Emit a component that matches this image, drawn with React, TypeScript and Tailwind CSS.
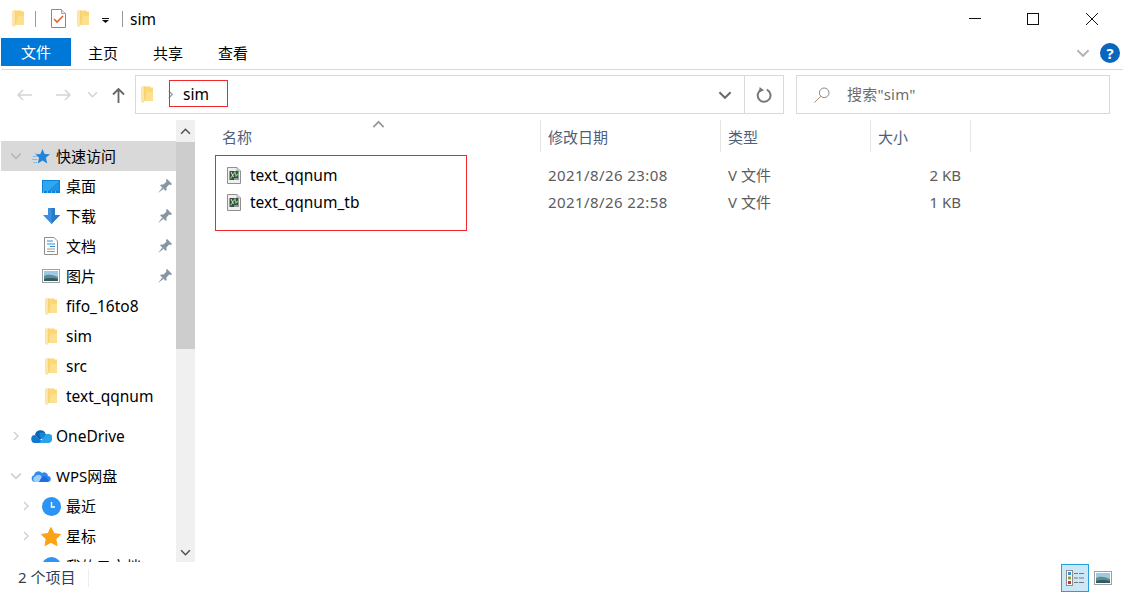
import type { ReactNode } from "react";

// Small inline icons for the explorer chrome
function Folder({ className = "" }: { className?: string }) {
  return (
    <svg viewBox="0 0 12 17" className={`h-[17px] w-[12px] ${className}`}>
      <path d="M2 0.5 H9.5 V1.5 H12 V15 H2 Z" fill="#fbd778" />
      <path d="M0 0.5 H3.5 V15 H3 V17 L0 16 Z" fill="#fbe5aa" />
      <path d="M6 6 H12 V15 H4 Z" fill="#fde08e" />
      <path d="M3.5 0.5 V15" stroke="#f4c964" strokeWidth="0.6" fill="none" />
    </svg>
  );
}

function TaskDoc() {
  return (
    <svg viewBox="0 0 15 19" className="h-[19px] w-[15px]">
      <path d="M0.5 0.5 H10.5 L14.5 4.5 V18.5 H0.5 Z" fill="#fff" stroke="#8a8a8a" />
      <path d="M10.5 0.5 V4.5 H14.5" fill="#e8e8e8" stroke="#a8a8a8" />
      <path d="M3 10 L6 13 L12 7" fill="none" stroke="#e8622a" strokeWidth="1.6" />
    </svg>
  );
}

function Dropdown() {
  return (
    <svg viewBox="0 0 7 5" className="h-[5px] w-[7px]">
      <path d="M0 0 H7 V1 H0 Z M0 2 H7 L3.5 5 Z" fill="#111" />
    </svg>
  );
}

function WindowControls() {
  return (
    <div className="flex h-full items-center">
      <svg viewBox="0 0 12 12" className="mr-[46px] h-[12px] w-[12px]">
        <path d="M0 5.5 H12" stroke="#111" fill="none" />
      </svg>
      <svg viewBox="0 0 12 12" className="mr-[47px] h-[12px] w-[12px]">
        <rect x="0.5" y="0.5" width="11" height="11" stroke="#111" fill="none" />
      </svg>
      <svg viewBox="0 0 12 12" className="mr-[25px] h-[12px] w-[12px]">
        <path d="M0 0 L12 12 M12 0 L0 12" stroke="#111" fill="none" />
      </svg>
    </div>
  );
}

function HelpBadge() {
  return (
    <div className="flex h-[20px] w-[20px] items-center justify-center rounded-full bg-[#0a65bd] text-[15px] font-bold leading-none text-white">
      ?
    </div>
  );
}

function Chevron({ dir, color = "#c4c4c4", size = 10 }: { dir: "down" | "right" | "up"; color?: string; size?: number }) {
  const d = dir === "down" ? "M1 3 L5 7 L9 3" : dir === "up" ? "M1 7 L5 3 L9 7" : "M3 1 L7 5 L3 9";
  return (
    <svg viewBox="0 0 10 10" width={size} height={size}>
      <path d={d} fill="none" stroke={color} strokeWidth="1.4" />
    </svg>
  );
}

function Arrow({ dir, color }: { dir: "left" | "right"; color: string }) {
  const d = dir === "left" ? "M15 6 H1 M6 1 L1 6 L6 11" : "M0 6 H14 M9 1 L14 6 L9 11";
  return (
    <svg viewBox="0 0 15 12" className="h-[12px] w-[15px]">
      <path d={d} fill="none" stroke={color} strokeWidth="1.5" />
    </svg>
  );
}

function UpArrow() {
  return (
    <svg viewBox="0 0 13 15" className="h-[15px] w-[13px]">
      <path d="M6.5 15 V1 M1 6.5 L6.5 1 L12 6.5" fill="none" stroke="#666" strokeWidth="1.8" />
    </svg>
  );
}

function Refresh() {
  return (
    <svg viewBox="0 0 16 16" className="h-[16px] w-[16px]">
      <path d="M5 2.8 A6.4 6.4 0 1 0 10.8 2.6" fill="none" stroke="#777" strokeWidth="2" />
      <path d="M3.6 0 L8 3.2 L3 5.6 Z" fill="#777" />
    </svg>
  );
}

function SearchGlass() {
  return (
    <svg viewBox="0 0 16 16" className="h-[16px] w-[16px]">
      <circle cx="10.2" cy="5.8" r="4.8" fill="none" stroke="#8a8a8a" />
      <path d="M6.8 9.2 L0.5 15.5" stroke="#b08c6a" fill="none" />
    </svg>
  );
}

function Pin() {
  return (
    <svg viewBox="0 0 13 13" className="h-[14px] w-[14px]">
      <path d="M8.4 0 L13 4.6 L12 5.6 L10.4 5.2 L7.8 8 L8 10.4 L7 11 L2 6 L2.8 5 L5 5.2 L7.8 2.6 L7.4 1 Z" fill="#8794a1" />
      <path d="M4 8 L0 13 L5 9.2 Z" fill="#8794a1" />
    </svg>
  );
}

function QuickStar() {
  return (
    <svg viewBox="0 0 18 15" className="h-[15px] w-[18px]">
      <path d="M10.5 0 L12.6 4.9 L18 5.3 L13.9 8.8 L15.2 14.5 L10.5 11.5 L5.8 14.5 L7.1 8.8 L3.4 5.4 L8.4 4.9 Z" fill="#1f84dc" />
      <path d="M0.5 7.5 H4.5 M0 10.5 H5.5 M1.5 13.5 H5" stroke="#80bdec" fill="none" />
      <path d="M2 4.5 H6" stroke="#a9d2f2" fill="none" />
    </svg>
  );
}

function DesktopIcon() {
  return (
    <svg viewBox="0 0 18 13" className="h-[13px] w-[18px]">
      <rect width="18" height="13" fill="#0a84d8" />
      <rect x="1" y="1" width="16" height="10" fill="#2ea8f0" />
      <path d="M17 1 V11 H6 Z" fill="#1f93e4" />
      <path d="M1 12 H17" stroke="#bfe3fa" strokeDasharray="1 3" fill="none" />
    </svg>
  );
}

function DownloadIcon() {
  return (
    <svg viewBox="0 0 17 16" className="h-[16px] w-[17px]">
      <path d="M5 0 H12 V7 H17 L8.5 16 L0 7 H5 Z" fill="#3b8fdc" />
      <path d="M8.5 0 H12 V7 H17 L8.5 16 Z" fill="#2a7cca" />
    </svg>
  );
}

function DocsIcon() {
  return (
    <svg viewBox="0 0 14 18" className="h-[18px] w-[14px]">
      <path d="M0.5 0.5 H10 L13.5 4 V17.5 H0.5 Z" fill="#fff" stroke="#8d8d8d" />
      <path d="M3 4 H9 M3 7 H11 M6 9.5 H11" stroke="#2f8ed8" fill="none" />
      <path d="M3 12 H11 M3 14.5 H11" stroke="#9a9a9a" fill="none" />
    </svg>
  );
}

function Landscape({ className = "" }: { className?: string }) {
  return (
    <svg viewBox="0 0 18 14" className={className}>
      <rect x="0.5" y="0.5" width="17" height="13" fill="#fff" stroke="#a0a0a0" />
      <rect x="2" y="2" width="14" height="10" fill="#9cc8ea" />
      <path d="M2 7 Q7 4 16 8 V12 H2 Z" fill="#5f8f84" />
      <path d="M2 10 Q9 8 16 10 V12 H2 Z" fill="#2f5a66" />
    </svg>
  );
}

function OneDriveIcon() {
  return (
    <svg viewBox="0 0 21 14" className="h-[14px] w-[21px]">
      <path d="M4 6 A5.5 5.5 0 0 1 14.5 4.5 L9 11 Z" fill="#0a64b5" />
      <path d="M8 5 A4 4 0 0 1 15 5.5 A4 4 0 0 1 19 9 L10 10 Z" fill="#1487d8" />
      <path d="M4.5 14 A4 4 0 0 1 4 6 L13 14 Z" fill="#0f78cf" />
      <path d="M8 14 L14 7 A3.5 3.5 0 0 1 21 10.5 A3.5 3.5 0 0 1 18 14 Z" fill="#2aa3ea" />
    </svg>
  );
}

function WpsCloud() {
  return (
    <svg viewBox="0 0 20 14" className="h-[14px] w-[20px]">
      <path d="M4 13 A3.5 3.5 0 0 1 3 6.2 A4.5 4.5 0 0 1 11 4 A3.8 3.8 0 0 1 17 7 A3 3 0 0 1 16.5 13 Z" fill="#2f8bf0" />
      <path d="M4 13 A3 3 0 0 1 4 7.5 A4 4 0 0 1 11 8 L8 13 Z" fill="#9fd0fb" />
      <path d="M8 13 L11 8 A3 3 0 0 1 16 9 A2.2 2.2 0 0 1 16.5 13 Z" fill="#1d6fe0" />
    </svg>
  );
}

function ClockIcon() {
  return (
    <svg viewBox="0 0 19 19" className="h-[19px] w-[19px]">
      <circle cx="9.5" cy="9.5" r="9.5" fill="#2b94f4" />
      <path d="M9.5 5 V10 H13" fill="none" stroke="#fff" strokeWidth="1.4" />
    </svg>
  );
}

function StarIcon() {
  return (
    <svg viewBox="0 0 20 19" className="h-[19px] w-[20px]">
      <path d="M10 0.5 L13 6.6 L19.6 7.4 L14.8 12 L16 18.6 L10 15.4 L4 18.6 L5.2 12 L0.4 7.4 L7 6.6 Z" fill="#fba317" strokeLinejoin="round" stroke="#fba317" />
    </svg>
  );
}

function CloudDocIcon() {
  return (
    <svg viewBox="0 0 19 19" className="h-[19px] w-[19px]">
      <circle cx="9.5" cy="9.5" r="9.5" fill="#2b94f4" />
    </svg>
  );
}

function VerilogFile() {
  return (
    <svg viewBox="0 0 14 17" className="h-[17px] w-[14px]">
      <path d="M0.5 0.5 H10 L13.5 4 V16.5 H0.5 Z" fill="#efefef" stroke="#8f8f8f" />
      <path d="M10 0.5 V4 H13.5" fill="#dcdcdc" stroke="#a8a8a8" />
      <rect x="2.5" y="4" width="9" height="9" fill="#3a4a44" />
      <path d="M3.5 11.5 L8 5 L9 9 L11 7" fill="none" stroke="#6fd05e" strokeWidth="1.3" />
      <path d="M4 5 L6.5 10 M7 12 H11" fill="none" stroke="#dfe9e2" />
    </svg>
  );
}

function DetailsView() {
  return (
    <svg viewBox="0 0 18 16" className="h-[16px] w-[18px]">
      <rect x="0.5" y="0.5" width="6" height="15" fill="#fff" stroke="#8e8e8e" />
      <rect x="2" y="2" width="3" height="3" fill="#3c8fd8" />
      <rect x="2" y="6.5" width="3" height="3" fill="#8aa03c" />
      <rect x="2" y="11" width="3" height="3" fill="#c0392b" />
      <path d="M8 3.5 H12 M13 3.5 H18 M8 8 H12 M13 8 H18 M8 12.5 H12 M13 12.5 H18" stroke="#777" fill="none" />
    </svg>
  );
}

type NavItem = {
  label: string;
  icon: ReactNode;
  nested?: boolean;
  latin?: boolean;
  chevron?: "down" | "right";
  pinned?: boolean;
  active?: boolean;
};

const quickAccess: NavItem[] = [
  { label: "快速访问", icon: <QuickStar />, chevron: "down", active: true },
  { label: "桌面", icon: <DesktopIcon />, nested: true, pinned: true },
  { label: "下载", icon: <DownloadIcon />, nested: true, pinned: true },
  { label: "文档", icon: <DocsIcon />, nested: true, pinned: true },
  { label: "图片", icon: <Landscape className="h-[14px] w-[18px]" />, nested: true, pinned: true },
  { label: "fifo_16to8", icon: <Folder />, nested: true, latin: true },
  { label: "sim", icon: <Folder />, nested: true, latin: true },
  { label: "src", icon: <Folder />, nested: true, latin: true },
  { label: "text_qqnum", icon: <Folder />, nested: true, latin: true },
];

const wpsDrive: NavItem[] = [
  { label: "WPS网盘", icon: <WpsCloud />, chevron: "down" },
  { label: "最近", icon: <ClockIcon />, nested: true, chevron: "right" },
  { label: "星标", icon: <StarIcon />, nested: true, chevron: "right" },
  { label: "我的云文档", icon: <CloudDocIcon />, nested: true, chevron: "right" },
];

function NavRow({ item }: { item: NavItem }) {
  return (
    <div className={`flex h-[30px] shrink-0 items-center ${item.active ? "bg-[#d9d9d9]" : ""}`}>
      <div className={`flex shrink-0 items-center ${item.nested ? "w-[39px] justify-end pr-[9px]" : "w-[29px] justify-center"}`}>
        {item.chevron && <Chevron dir={item.chevron} color={item.active ? "#b8b8b8" : "#cfcfcf"} size={item.chevron === "down" ? 12 : 10} />}
      </div>
      <div className="flex w-[22px] shrink-0 items-center justify-center">{item.icon}</div>
      <span className={`ml-[4px] whitespace-nowrap text-black ${item.latin ? "pt-[2px] text-[15.5px]" : "text-[15px]"}`}>{item.label}</span>
      {item.pinned && (
        <div className="ml-auto mr-[4px]">
          <Pin />
        </div>
      )}
    </div>
  );
}

function Sidebar() {
  return (
    <div className="flex h-full w-[196px] shrink-0">
      <div className="ml-px flex w-[175px] shrink-0 flex-col overflow-hidden pt-[21px]">
        {quickAccess.map((item) => (
          <NavRow key={item.label} item={item} />
        ))}
        <div className="mt-[10px]">
          <NavRow item={{ label: "OneDrive", icon: <OneDriveIcon />, chevron: "right", latin: true }} />
        </div>
        <div className="mt-[10px]">
          {wpsDrive.map((item) => (
            <NavRow key={item.label} item={item} />
          ))}
        </div>
      </div>
      {/* nav pane scrollbar */}
      <div className="flex h-full w-[19px] shrink-0 flex-col items-center bg-[#f0f0f0]">
        <div className="flex h-[22px] items-center justify-center">
          <Chevron dir="up" color="#505050" size={11} />
        </div>
        <div className="h-[207px] w-full bg-[#cdcdcd]" />
        <div className="flex-1" />
        <div className="flex h-[20px] items-center justify-center">
          <Chevron dir="down" color="#505050" size={11} />
        </div>
      </div>
      <div className="w-px" />
    </div>
  );
}

const columns = "grid grid-cols-[345px_180px_150px_100px]";

const files = [
  { name: "text_qqnum", date: "2021/8/26 23:08", type: "V 文件", size: "2 KB" },
  { name: "text_qqnum_tb", date: "2021/8/26 22:58", type: "V 文件", size: "1 KB" },
];

function FileList() {
  return (
    <div className="relative min-w-0 flex-1">
      <div className={`${columns} h-[32px] text-[15px] text-[#4c607a]`}>
        <div className="relative flex items-center border-r border-[#e5e5e5] pl-[26px] pt-[2px]">
          名称
          <div className="absolute left-[176px] top-[-2px]">
            <Chevron dir="up" color="#9a9a9a" size={13} />
          </div>
        </div>
        <div className="flex items-center border-r border-[#e5e5e5] pl-[7px] pt-[2px]">修改日期</div>
        <div className="flex items-center border-r border-[#e5e5e5] pl-[7px] pt-[2px]">类型</div>
        <div className="flex items-center border-r border-[#e5e5e5] pl-[7px] pt-[2px]">大小</div>
      </div>
      <div className="pt-[10px]">
        {files.map((file) => (
          <div key={file.name} className={`${columns} h-[27px] items-center text-[15px] tracking-[0.42px] text-[#5c5c5c]`}>
            <div className="flex items-center pl-[31px] text-[15.5px] tracking-normal text-black">
              <VerilogFile />
              <span className="ml-[9px]">{file.name}</span>
            </div>
            <div className="pl-[7px]">{file.date}</div>
            <div className="pl-[7px] tracking-normal">{file.type}</div>
            <div className="pr-[10px] text-right tracking-normal">{file.size}</div>
          </div>
        ))}
      </div>
      {/* red annotation around the two files */}
      <div className="absolute left-[19px] top-[35px] h-[76px] w-[252px] border border-[#f0282d]" />
    </div>
  );
}

export default function App() {
  return (
    <div className="flex h-[593px] w-[1123px] flex-col overflow-hidden bg-white font-['Noto_Sans','Noto_Sans_CJK_SC',sans-serif] text-black">
      {/* title bar */}
      <div className="flex h-[37px] shrink-0 items-center pl-[12px]">
        <Folder />
        <div className="ml-[11px] h-[16px] w-px bg-[#9a9a9a]" />
        <div className="ml-[15px]">
          <TaskDoc />
        </div>
        <Folder className="ml-[11px]" />
        <div className="ml-[13px] mt-[4px]">
          <Dropdown />
        </div>
        <div className="ml-[13px] h-[16px] w-px bg-[#9a9a9a]" />
        <span className="ml-[7px] pt-[2px] text-[15.5px]">sim</span>
        <div className="ml-auto h-full">
          <WindowControls />
        </div>
      </div>

      {/* ribbon tabs */}
      <div className="ml-px flex h-[33px] shrink-0 items-start border-b border-[#dadada] pt-px">
        <div className="flex h-[28px] w-[70px] items-center justify-center bg-[#0078d7] text-[15px] text-white">文件</div>
        <div className="ml-[17px] flex h-[30px] items-center text-[15px]">主页</div>
        <div className="ml-[35px] flex h-[30px] items-center text-[15px]">共享</div>
        <div className="ml-[35px] flex h-[30px] items-center text-[15px]">查看</div>
        <div className="ml-auto mr-[3px] flex h-[30px] items-center gap-[10px]">
          <Chevron dir="down" color="#b5b5b5" size={14} />
          <HelpBadge />
        </div>
      </div>

      {/* address row */}
      <div className="flex h-[50px] shrink-0 items-start pt-[5px]">
        <div className="flex h-[39px] w-[135px] shrink-0 items-center pl-[17px]">
          <Arrow dir="left" color="#d3d3d3" />
          <div className="ml-[24px]">
            <Arrow dir="right" color="#d3d3d3" />
          </div>
          <div className="ml-[16px]">
            <Chevron dir="down" color="#d3d3d3" size={11} />
          </div>
          <div className="ml-[14px] mt-[2px]">
            <UpArrow />
          </div>
        </div>
        <div className="relative flex h-[39px] w-[649px] shrink-0 items-center border border-[#d9d9d9]">
          <Folder className="ml-[5px]" />
          <div className="ml-[13px]">
            <Chevron dir="right" color="#9a9a9a" size={9} />
          </div>
          <span className="ml-[8px] text-[15.5px]">sim</span>
          <div className="ml-auto flex h-full items-center">
            <Chevron dir="down" color="#6a6a6a" size={14} />
            <div className="ml-[12px] flex h-full w-[39px] items-center justify-center border-l border-[#d9d9d9]">
              <Refresh />
            </div>
          </div>
          {/* red annotation over the breadcrumb */}
          <div className="absolute left-[33px] top-[4px] h-[27px] w-[59px] border border-[#f0282d]" />
        </div>
        <div className="ml-[12px] flex h-[39px] w-[314px] shrink-0 items-center border border-[#d9d9d9] pl-[17px] text-[15px] text-[#6d6d6d]">
          <SearchGlass />
          <span className="ml-[17px] tracking-[0.2px]">搜索"sim"</span>
        </div>
      </div>

      {/* body */}
      <div className="flex min-h-0 flex-1">
        <Sidebar />
        <FileList />
      </div>

      {/* status bar */}
      <div className="flex h-[31px] shrink-0 items-center pl-[18px] text-[15px] text-[#2b3f55]">
        <span>2 个项目</span>
        <div className="ml-[13px] h-[18px] w-px bg-[#eeeeee]" />
        <div className="ml-auto flex items-center">
          <div className="flex h-[28px] w-[28px] items-center justify-center border border-[#26a0da] bg-[#cce8f6]">
            <DetailsView />
          </div>
          <div className="ml-[5px] mr-[11px]">
            <Landscape className="h-[14px] w-[18px]" />
          </div>
        </div>
      </div>
    </div>
  );
}
